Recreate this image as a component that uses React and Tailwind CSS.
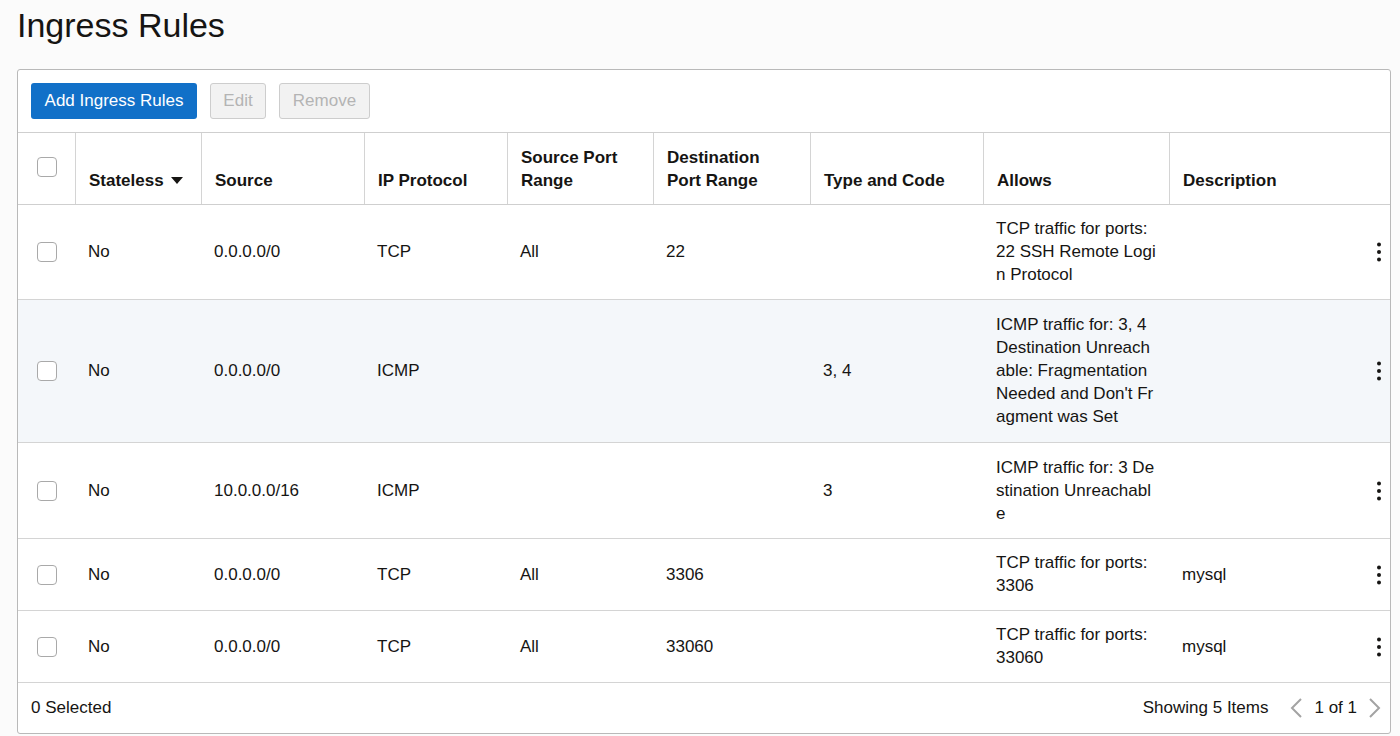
import React from 'react';

const COLS = "grid grid-cols-[57px_126px_163px_143px_146px_157px_173px_186px_1fr]";

// rules shown in the table, allows text kept as it wraps on screen
const rules = [
  {
    h: "h-[94px]", bg: "bg-white", source: "0.0.0.0/0", protocol: "TCP", srcPort: "All", dstPort: "22", typeCode: "",
    allows: ["TCP traffic for ports:", "22 SSH Remote Logi", "n Protocol"], description: "",
  },
  {
    h: "h-[142px]", bg: "bg-[#f4f7fa]", source: "0.0.0.0/0", protocol: "ICMP", srcPort: "", dstPort: "", typeCode: "3, 4",
    allows: ["ICMP traffic for: 3, 4", "Destination Unreach", "able: Fragmentation", "Needed and Don't Fr", "agment was Set"], description: "",
  },
  {
    h: "h-[95px]", bg: "bg-white", source: "10.0.0.0/16", protocol: "ICMP", srcPort: "", dstPort: "", typeCode: "3",
    allows: ["ICMP traffic for: 3 De", "stination Unreachabl", "e"], description: "",
  },
  {
    h: "h-[71px]", bg: "bg-white", source: "0.0.0.0/0", protocol: "TCP", srcPort: "All", dstPort: "3306", typeCode: "",
    allows: ["TCP traffic for ports:", "3306"], description: "mysql",
  },
  {
    h: "h-[71px]", bg: "bg-white", source: "0.0.0.0/0", protocol: "TCP", srcPort: "All", dstPort: "33060", typeCode: "",
    allows: ["TCP traffic for ports:", "33060"], description: "mysql",
  },
];

function Checkbox() {
  return <div className="w-[20px] h-[20px] rounded-[4px] border border-[#a9a9a9] bg-white"></div>;
}

function Kebab() {
  return (
    <svg width="4" height="20" viewBox="0 0 4 20" className="fill-[#161513]">
      <circle cx="2" cy="2.5" r="2" />
      <circle cx="2" cy="10" r="2" />
      <circle cx="2" cy="17.5" r="2" />
    </svg>
  );
}

function Chevron({ dir }) {
  return (
    <svg width="12" height="20" viewBox="0 0 12 20" fill="none" stroke="#a3a3a3" strokeWidth="2">
      {dir === 'left' ? <path d="M11 1 L2 10 L11 19" /> : <path d="M1 1 L10 10 L1 19" />}
    </svg>
  );
}

function HeaderCell({ children }) {
  return (
    <div className="flex items-end pl-[13px] pb-[12px] border-l border-[#d4d4d4] font-bold leading-[23px]">
      <div>{children}</div>
    </div>
  );
}

function Cell({ children }) {
  return <div className="flex items-center pl-[13px] pb-px">{children}</div>;
}

function App() {
  return (
    <div className="min-h-[736px] bg-[#fbfbfb] text-[17px] text-[#161513] font-['Liberation_Sans',Arial,sans-serif] overflow-hidden">
      <h1 className="pl-[17px] pt-[8px] text-[34px] leading-[34px] font-normal">Ingress Rules</h1>

      <div className="ml-[17px] mt-[27px] w-[1374px] bg-white border border-[#b9b9b9] rounded-[3px]">
        {/* toolbar */}
        <div className="flex gap-[13px] px-[13px] py-[13px] border-b border-[#cfcfcf]">
          <button className="w-[166px] h-[36px] rounded-[3px] bg-[#1170c8] text-white">Add Ingress Rules</button>
          <button className="w-[56px] h-[36px] rounded-[3px] bg-[#f2f2f2] border border-[#cdcdcd] text-[#b4b4b4]">Edit</button>
          <button className="w-[91px] h-[36px] rounded-[3px] bg-[#f2f2f2] border border-[#cdcdcd] text-[#b4b4b4]">Remove</button>
        </div>

        {/* header */}
        <div className={`${COLS} h-[72px] border-b border-[#cfcfcf]`}>
          <div className="flex justify-center pt-[24px]"><Checkbox /></div>
          <HeaderCell>
            <span className="flex items-center gap-[7px]">
              Stateless
              <svg width="12" height="7" viewBox="0 0 12 7"><path d="M0 0 H12 L6 7 Z" fill="#161513" /></svg>
            </span>
          </HeaderCell>
          <HeaderCell>Source</HeaderCell>
          <HeaderCell>IP Protocol</HeaderCell>
          <HeaderCell>Source Port<br />Range</HeaderCell>
          <HeaderCell>Destination<br />Port Range</HeaderCell>
          <HeaderCell>Type and Code</HeaderCell>
          <HeaderCell>Allows</HeaderCell>
          <HeaderCell>Description</HeaderCell>
        </div>

        {/* rows */}
        {rules.map((r, i) => (
          <div key={i} className={`${COLS} ${r.h} ${r.bg} box-content border-b border-[#d4d4d4] leading-[23px]`}>
            <div className="flex items-center justify-center"><Checkbox /></div>
            <Cell>No</Cell>
            <Cell>{r.source}</Cell>
            <Cell>{r.protocol}</Cell>
            <Cell>{r.srcPort}</Cell>
            <Cell>{r.dstPort}</Cell>
            <Cell>{r.typeCode}</Cell>
            <div className="flex flex-col justify-center pl-[13px] pb-px">
              {r.allows.map((line, j) => <div key={j}>{line}</div>)}
            </div>
            <div className="flex items-center justify-between pl-[13px] pr-[9px]">
              <span className="pb-px">{r.description}</span>
              <Kebab />
            </div>
          </div>
        ))}

        {/* footer */}
        <div className="h-[50px] flex items-center justify-between pl-[13px] pr-[9px]">
          <span>0 Selected</span>
          <div className="flex items-center">
            <span>Showing 5 Items</span>
            <span className="ml-[22px]"><Chevron dir="left" /></span>
            <span className="ml-[12px]">1 of 1</span>
            <span className="ml-[12px]"><Chevron dir="right" /></span>
          </div>
        </div>
      </div>
    </div>
  );
}

export default App;
